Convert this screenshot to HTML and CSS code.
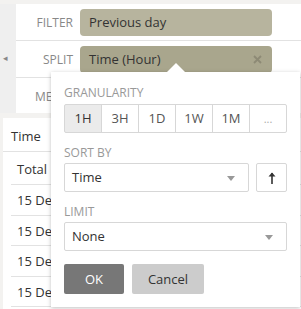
FILE: index.html
```html
<!DOCTYPE html>
<html lang="en">
<head>
    <meta charset="UTF-8">
    <title>Split menu</title>
    <link rel="stylesheet" href="styles.css">
</head>
<body>
    <div class="top">
        <div class="rail"><span class="rail-toggle">&#9666;</span></div>
        <div class="shelves">
            <div class="shelf">
                <div class="shelf-label">FILTER</div>
                <div class="pill filter-pill">Previous day</div>
            </div>
            <div class="shelf">
                <div class="shelf-label">SPLIT</div>
                <div class="pill split-pill">Time (Hour)
                    <svg class="pill-x" width="9" height="9" viewBox="0 0 9 9">
                        <path d="M1 1L8 8M8 1L1 8" stroke="#8d8a75" stroke-width="1.8"/>
                    </svg>
                </div>
            </div>
            <div class="shelf">
                <div class="shelf-label">MEASURES</div>
            </div>
        </div>
    </div>

    <div class="table">
        <div class="table-head">Time</div>
        <div class="table-row total">Total</div>
        <div class="table-row">15 Dec</div>
        <div class="table-row">15 Dec</div>
        <div class="table-row">15 Dec</div>
        <div class="table-row">15 Dec</div>
    </div>

    <div class="split-menu">
        <div class="menu-label">GRANULARITY</div>
        <div class="gran-group">
            <div class="gran selected">1H</div>
            <div class="gran">3H</div>
            <div class="gran">1D</div>
            <div class="gran">1W</div>
            <div class="gran">1M</div>
            <div class="gran more">...</div>
        </div>

        <div class="menu-label spaced">SORT BY</div>
        <div class="sort-line">
            <div class="dropdown">Time<span class="caret"></span></div>
            <div class="dir-btn">
                <svg width="10" height="14" viewBox="0 0 10 14">
                    <path d="M5 13V2" stroke="#333" stroke-width="1.6" fill="none"/>
                    <path d="M1.5 5.5L5 1.5L8.5 5.5Z" fill="#333"/>
                </svg>
            </div>
        </div>

        <div class="menu-label spaced">LIMIT</div>
        <div class="dropdown full">None<span class="caret"></span></div>

        <div class="menu-actions">
            <button class="btn ok">OK</button>
            <button class="btn cancel">Cancel</button>
        </div>
    </div>
</body>
</html>
```

FILE: styles.css
```css
body {
    margin: 0;
    font-family: "Open Sans", sans-serif;
    background-color: #f3f2f0;
    color: #333;
    width: 301px;
    height: 309px;
    overflow: hidden;
    position: relative;
}
.top {
    display: flex;
    padding-top: 4px;
    height: 109px;
}
.rail {
    width: 16px;
    background-color: #efefef;
    position: relative;
}
.rail-toggle {
    position: absolute;
    left: 3px;
    top: 47px;
    font-size: 9px;
    color: #888;
}
.shelves {
    flex: 1;
    background-color: #fff;
}
.shelf {
    display: flex;
    align-items: center;
    height: 36px;
    border-bottom: 1px solid #e2e2e2;
}
.shelf:last-child {
    border-bottom: none;
}
.shelf-label {
    width: 38px;
    flex-shrink: 0;
    padding: 0 7px 0 19px;
    text-align: right;
    font-size: 12px;
    color: #888;
    white-space: nowrap;
}
.pill {
    width: 183px;
    height: 27px;
    line-height: 27px;
    padding-left: 9px;
    border-radius: 4px;
    font-size: 13px;
    position: relative;
}
.filter-pill {
    background-color: #b7b49e;
}
.split-pill {
    background-color: #a9a68d;
}
.pill-x {
    position: absolute;
    right: 10px;
    top: 9px;
}
.table {
    margin: 5px 0 0 3px;
    background-color: #fff;
    height: 200px;
}
.table-head {
    height: 33px;
    line-height: 36px;
    padding-left: 8px;
    font-size: 13px;
    border-bottom: 1px solid #e2e2e2;
}
.table-row {
    height: 29.5px;
    line-height: 30px;
    margin-left: 8px;
    padding-left: 6px;
    font-size: 13px;
    white-space: nowrap;
    border-bottom: 1px solid #e2e2e2;
}
.table-row.total {
    height: 32px;
    line-height: 34px;
}
.split-menu {
    position: absolute;
    left: 51px;
    top: 72px;
    width: 223px;
    height: 209px;
    padding: 13px 13px;
    background-color: #fff;
    box-shadow: 0 1px 4px rgba(0, 0, 0, 0.25);
}
.split-menu::before {
    content: "";
    position: absolute;
    left: 116px;
    top: -9px;
    border-left: 9px solid transparent;
    border-right: 9px solid transparent;
    border-bottom: 9px solid #fff;
}
.menu-label {
    font-size: 12px;
    line-height: 15px;
    color: #999;
}
.menu-label.spaced {
    margin-top: 12px;
}
.gran-group {
    display: flex;
    margin-top: 4px;
}
.gran {
    width: 36px;
    height: 27px;
    line-height: 27px;
    text-align: center;
    font-size: 13px;
    color: #555;
    border: 1px solid #d7d7d7;
    margin-left: -1px;
}
.gran:first-child {
    margin-left: 0;
    border-radius: 2px 0 0 2px;
}
.gran:last-child {
    border-radius: 0 2px 2px 0;
}
.gran.selected {
    background-color: #ebebeb;
    color: #333;
}
.gran.more {
    color: #aaa;
    font-size: 11px;
}
.sort-line {
    display: flex;
    margin-top: 3px;
}
.dropdown {
    position: relative;
    flex: 1;
    height: 27px;
    line-height: 27px;
    padding-left: 7px;
    font-size: 13px;
    border: 1px solid #d7d7d7;
    border-radius: 2px;
}
.dropdown.full {
    margin-top: 3px;
}
.caret {
    position: absolute;
    right: 13px;
    top: 12px;
    border-left: 4px solid transparent;
    border-right: 4px solid transparent;
    border-top: 5px solid #999;
}
.dir-btn {
    width: 29px;
    height: 27px;
    margin-left: 7px;
    border: 1px solid #d7d7d7;
    border-radius: 2px;
    display: flex;
    align-items: center;
    justify-content: center;
}
.menu-actions {
    display: flex;
    gap: 8px;
    margin-top: 13px;
}
.btn {
    height: 30px;
    border: none;
    border-radius: 2px;
    font-family: "Open Sans", sans-serif;
    font-size: 13px;
}
.btn.ok {
    width: 60px;
    background-color: #777;
    color: #fff;
}
.btn.cancel {
    width: 72px;
    background-color: #ccc;
    color: #333;
}
```
